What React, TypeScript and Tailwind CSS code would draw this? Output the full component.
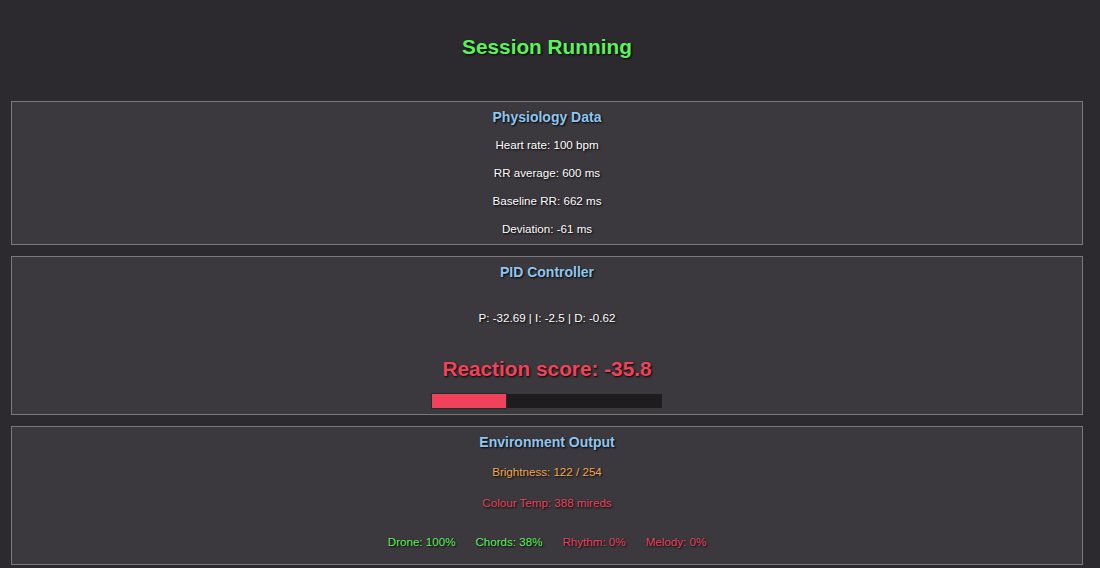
import React from "react";

const shadow = "[text-shadow:1px_1px_2px_rgba(0,0,0,1)]";

function Panel({ title, children, className = "" }: { title: string; children: React.ReactNode; className?: string }) {
  return (
    <div className={`border border-[#79787b] bg-[#3b393d] pt-[6px] ${className}`}>
      <div className={`h-[18px] text-center text-[14px] font-bold leading-[18px] text-[#8ec6f2] ${shadow}`}>{title}</div>
      {children}
    </div>
  );
}

function Line({ children, className = "" }: { children: React.ReactNode; className?: string }) {
  return (
    <div className={`h-[28px] text-center text-[11.6px] leading-[28px] ${shadow} ${className}`}>{children}</div>
  );
}

export default function App() {
  return (
    <div
      className="min-h-screen w-full bg-[#2c2a2e] text-white"
      style={{ fontFamily: '"Liberation Sans", Arial, sans-serif' }}
    >
      <div className="ml-[11px] w-[1072px] pt-[33px]">
        <div className={`h-[28px] text-center text-[20.8px] font-bold leading-[28px] text-[#5cf25c] ${shadow}`}>
          Session Running
        </div>

        <div className="mt-[40px] flex flex-col gap-[11px]">
          <Panel title="Physiology Data" className="pb-[1px]">
            <div className="mt-[5px]">
              <Line>Heart rate: 100 bpm</Line>
              <Line>RR average: 600 ms</Line>
              <Line>Baseline RR: 662 ms</Line>
              <Line>Deviation: -61 ms</Line>
            </div>
          </Panel>

          <Panel title="PID Controller" className="pb-[6px]">
            <Line className="mt-[23px]">P: -32.69 | I: -2.5 | D: -0.62</Line>
            <div
              className={`mt-[23px] h-[28px] text-center text-[20.8px] font-bold leading-[28px] text-[#f0435b] ${shadow}`}
            >
              Reaction score: -35.8
            </div>
            <div className="mx-auto mt-[11px] flex h-[14px] w-[230px] bg-[#1e1c1f]">
              <div className="h-full w-[74px] bg-[#f0435b] shadow-[0_0_0_1px_#1f2f2c]" />
            </div>
          </Panel>

          <Panel title="Environment Output" className="pb-[8px]">
            <Line className="mt-[7px] text-[#f2a94e]">Brightness: 122 / 254</Line>
            <Line className="mt-[3px] text-[#e8435d]">Colour Temp: 388 mireds</Line>
            <div className={`mt-[11px] flex h-[28px] items-center justify-center gap-[20px] text-[11.6px] ${shadow}`}>
              <span className="text-[#5cf25c]">Drone: 100%</span>
              <span className="text-[#5cf25c]">Chords: 38%</span>
              <span className="text-[#e8435d]">Rhythm: 0%</span>
              <span className="text-[#e8435d]">Melody: 0%</span>
            </div>
          </Panel>
        </div>
      </div>
    </div>
  );
}
